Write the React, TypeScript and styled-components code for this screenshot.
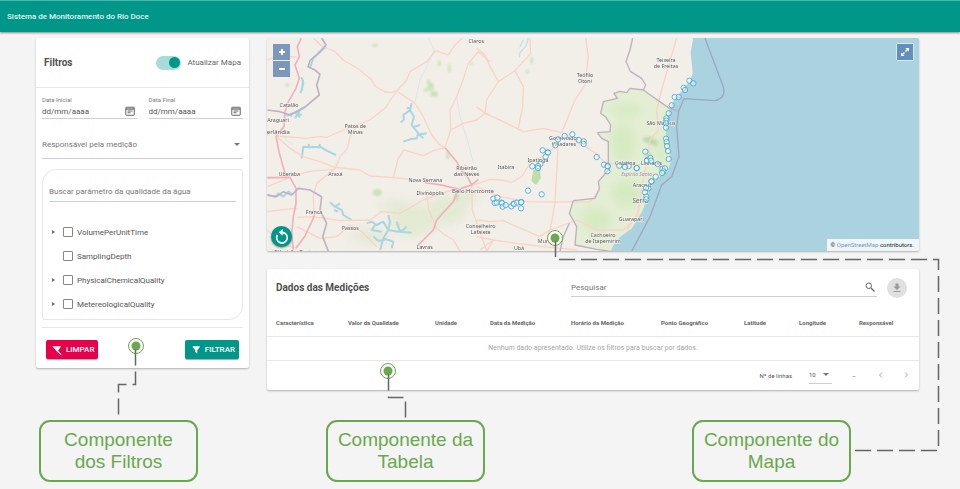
import React, { useState } from "react";
import styled, { createGlobalStyle, css } from "styled-components";

const teal = "#009688";
const green = "#6aa84f";
const line = "#e6e6e6";

const GlobalStyle = createGlobalStyle`
  *, *::before, *::after { box-sizing: border-box; }
  body {
    margin: 0;
    background: #f4f4f4;
    color: #555;
    font-family: Roboto, "Liberation Sans", sans-serif;
    font-size: 8px;
  }
  button, input, select { font: inherit; color: inherit; }
`;

const Page = styled.div`
  position: relative;
  overflow: hidden;
  padding-bottom: 8px;
`;

const TopBar = styled.header`
  display: flex;
  align-items: center;
  height: 32px;
  padding: 0 7px;
  background: ${teal};
  border-top: 1px solid #4db6ac;
  box-shadow: 0 1px 2px rgba(0, 0, 0, 0.45);
  color: #e4f5f3;
`;

const AppTitle = styled.h1`
  margin: 0;
  font-size: 8px;
  font-weight: 500;
`;

const Main = styled.main`
  display: grid;
  grid-template-columns: 213px minmax(0, 1fr);
  gap: 18px;
  align-items: start;
  padding: 6px 41px 0 36px;
`;

const Card = styled.section`
  background: #fff;
  border-radius: 2px;
  box-shadow: 0 1px 2px rgba(0, 0, 0, 0.28);
`;

const Column = styled.div`
  display: grid;
  gap: 18px;
`;

const CardTitle = styled.h2`
  margin: 0;
  font-size: 10px;
  font-weight: 700;
  color: #505050;
`;

const FilterHead = styled.div`
  display: flex;
  align-items: center;
  justify-content: space-between;
  height: 50px;
  padding: 0 8px;
  border-bottom: 1px solid ${line};
`;

const SwitchLabel = styled.label`
  display: flex;
  align-items: center;
  gap: 6px;
  color: #666;
`;

const Switch = styled.input`
  appearance: none;
  display: flex;
  align-items: center;
  width: 25px;
  height: 14px;
  margin: 0;
  padding: 0 1px;
  border-radius: 7px;
  background: #ddd;
  &::before {
    content: "";
    width: 11px;
    height: 11px;
    border-radius: 50%;
    background: #fff;
  }
  &:checked {
    justify-content: flex-end;
    background: #a8ddd7;
  }
  &:checked::before { background: ${teal}; }
`;

const FilterBody = styled.div`
  padding: 8px 6px 0;
`;

const DateRow = styled.div`
  display: grid;
  grid-template-columns: 1fr 1fr;
  gap: 12px;
`;

const Field = styled.div`
  min-width: 0;
`;

const FieldLabel = styled.label`
  display: block;
  height: 8px;
  font-size: 6px;
  line-height: 8px;
  color: #7a7a7a;
`;

const underline = css`
  border-bottom: 1px solid #cfcfcf;
`;

const InputRow = styled.div`
  display: flex;
  align-items: center;
  height: 15px;
  ${underline}
`;

const BareInput = styled.input`
  flex: 1;
  width: 0;
  min-width: 0;
  padding: 0;
  border: 0;
  outline: 0;
  background: transparent;
  &::placeholder { color: #777; opacity: 1; }
`;

const DateInput = styled(BareInput)`
  &::placeholder { color: #555; }
`;

const IconButton = styled.button<{ $size: number }>`
  display: grid;
  place-items: center;
  width: ${(p) => p.$size}px;
  height: ${(p) => p.$size}px;
  padding: 0;
  border: 0;
  background: transparent;
  color: #666;
`;

const SelectWrap = styled.div`
  position: relative;
  display: flex;
  align-items: center;
  height: 28px;
  margin-top: 12px;
  ${underline}
`;

const Select = styled.select`
  appearance: none;
  width: 100%;
  padding: 0;
  border: 0;
  outline: 0;
  background: transparent;
  color: #777;
`;

const Caret = styled.span<{ $right: number }>`
  position: absolute;
  right: ${(p) => p.$right}px;
  border: 3px solid transparent;
  border-top-color: #777;
  border-bottom-width: 0;
  pointer-events: none;
`;

const ParameterBox = styled.div`
  height: 151px;
  margin-top: 10px;
  padding: 12px 6px 0;
  border: 1px solid ${line};
  border-radius: 14px 3px 14px 3px;
`;

const ParameterSearch = styled.div`
  display: flex;
  height: 20px;
  ${underline}
`;

const Tree = styled.ul`
  margin: 18px 0 0;
  padding: 0;
  list-style: none;
`;

const TreeItem = styled.li`
  display: grid;
  grid-template-columns: 14px 1fr;
  align-items: center;
  height: 24px;
`;

const Expander = styled.button`
  width: 8px;
  height: 8px;
  padding: 0;
  border: 0;
  background: transparent;
  display: grid;
  place-items: center;
  &::before {
    content: "";
    border: 2px solid transparent;
    border-left: 3px solid #666;
    border-right: 0;
  }
`;

const CheckLabel = styled.label`
  grid-column: 2;
  display: flex;
  align-items: center;
  gap: 4px;
`;

const CheckBox = styled.input`
  appearance: none;
  width: 10px;
  height: 10px;
  margin: 0;
  border: 1px solid #858585;
  border-radius: 1px;
  &:checked { background: ${teal}; }
`;

const Actions = styled.div`
  display: flex;
  justify-content: space-between;
  align-items: center;
  height: 41px;
  margin-top: 7px;
  padding: 3px 4px 0;
  border-top: 1px solid ${line};
`;

const ActionButton = styled.button<{ $color: string }>`
  display: flex;
  align-items: center;
  gap: 4px;
  height: 19px;
  padding: 0 4px 0 6px;
  border: 0;
  border-radius: 2px;
  background: ${(p) => p.$color};
  box-shadow: 0 1px 1px rgba(0, 0, 0, 0.35);
  color: #fff;
  font-weight: 500;
`;

const MapCard = styled(Card)`
  position: relative;
  height: 213px;
  overflow: hidden;
  background: #f2efe9;
`;

const MapDrawing = styled.svg`
  display: block;
  width: 100%;
  height: 100%;
  font-family: "Noto Sans", sans-serif;
`;

const ZoomControl = styled.div`
  position: absolute;
  top: 6px;
  left: 6px;
  display: grid;
  gap: 1px;
`;

const MapButton = styled.button`
  display: grid;
  place-items: center;
  width: 17px;
  height: 16px;
  padding: 0;
  border: 0;
  background: #7b98bc;
  color: #fff;
`;

const FullScreen = styled(MapButton)`
  position: absolute;
  top: 5px;
  right: 5px;
  width: 18px;
  height: 18px;
  border: 1px solid #d5e8ef;
  border-radius: 1px;
  background: #658fbb;
`;

const ResetButton = styled(MapButton)`
  position: absolute;
  left: 4px;
  bottom: 4px;
  width: 21px;
  height: 21px;
  border-radius: 50%;
  background: ${teal};
  box-shadow: 0 1px 2px rgba(0, 0, 0, 0.4);
`;

const Attribution = styled.p`
  position: absolute;
  right: 0;
  bottom: 0;
  margin: 0;
  padding: 0 5px 0 4px;
  background: rgba(255, 255, 255, 0.8);
  color: #222;
  font-size: 6px;
  line-height: 12px;
  a { color: #7b98bc; text-decoration: none; }
`;

const TableHead = styled.div`
  display: flex;
  align-items: center;
  height: 37px;
  padding: 0 12px 0 9px;
`;

const TableSearch = styled.div`
  display: flex;
  align-items: center;
  flex: 0 1 306px;
  height: 19px;
  margin-left: auto;
  margin-right: 10px;
  ${underline}
`;

const Download = styled(IconButton)`
  border-radius: 50%;
  background: #e0e0e0;
  color: #999;
`;

const Table = styled.table`
  width: 100%;
  border-collapse: collapse;
  table-layout: fixed;
  th {
    height: 30px;
    padding: 4px 0 0 9px;
    border-bottom: 1px solid ${line};
    color: #666;
    font-size: 6px;
    font-weight: 700;
    text-align: left;
    white-space: nowrap;
  }
  td {
    height: 24px;
    padding: 0;
    border-bottom: 1px solid ${line};
    color: #a5a5a5;
    font-size: 7px;
    text-align: center;
  }
`;

const Pager = styled.div`
  display: flex;
  align-items: center;
  justify-content: flex-end;
  height: 29px;
  padding-right: 6px;
  font-size: 6px;
  color: #555;
`;

const RowsSelect = styled.div`
  position: relative;
  display: flex;
  align-items: center;
  width: 23px;
  height: 18px;
  margin: 0 20px 0 17px;
  ${underline}
  select { color: #555; }
`;

const Range = styled.span`
  width: 22px;
`;

const PageButton = styled(IconButton)`
  margin-left: 11px;
  color: #aaa;
`;

const PreviousButton = styled(IconButton)`
  color: #aaa;
`;

const Callouts = styled.footer`
  display: flex;
  margin-top: 30px;
  padding-left: 39px;
`;

const Callout = styled.p<{ $gap: number }>`
  width: 159px;
  height: 62px;
  margin: 0 ${(p) => p.$gap}px 0 0;
  padding: 7px 0;
  border: 2px solid ${green};
  border-radius: 11px;
  color: ${green};
  font-family: "Liberation Sans", sans-serif;
  font-size: 19px;
  line-height: 22px;
  text-align: center;
`;

const Connectors = styled.svg`
  position: absolute;
  top: 0;
  left: 0;
  pointer-events: none;
`;

const CalendarIcon = () => (
  <svg width="10" height="10" viewBox="0 0 20 20" fill="none" stroke="currentColor" strokeWidth="2">
    <rect x="1.500" y="2.500" width="17" height="16" rx="1" />
    <path d="M2 6h16" strokeWidth="2.600" />
    <path d="M5 10h10M5 13.500h6" />
  </svg>
);

const FunnelIcon = ({ off = false }: { off?: boolean }) => (
  <svg width="10" height="10" viewBox="0 0 24 24" fill="currentColor">
    <path d="M4 3h17v2L15 12.500V21L10 17V12.500L4 5z" />
    {off && <path d="M0 5L18 24" stroke="#e6004c" strokeWidth="3" />}
    {off && <path d="M2 3L22 23" stroke="currentColor" strokeWidth="2.500" />}
  </svg>
);

const SearchIcon = () => (
  <svg width="10" height="10" viewBox="0 0 20 20" fill="none" stroke="currentColor" strokeWidth="2">
    <circle cx="7.500" cy="7.500" r="5.500" />
    <path d="M12 12l7 7" strokeWidth="2.600" />
  </svg>
);

const DownloadIcon = () => (
  <svg width="10" height="10" viewBox="0 0 20 20" fill="currentColor">
    <path d="M7 1h6v6h4l-7 7-7-7h4zM3 16h14v2H3z" />
  </svg>
);

const Chevron = ({ d }: { d: string }) => (
  <svg width="8" height="8" viewBox="0 0 16 16" fill="none" stroke="currentColor" strokeWidth="2">
    <path d={d} />
  </svg>
);

const roadsWest = [
  "M160 24L185 48L225 65L250 90L300 120L335 150L345 168L375 186L395 187L410 183L440 150L450 125L500 95L527 62L565 75L585 45L605 26",
  "M410 183L375 235L330 270L290 285L270 320L262 355L240 380L226 415",
  "M48 318L140 325L180 319L200 322L250 300L290 285",
  "M48 318L90 355L130 380L180 395L225 412L300 420L330 438L400 443L470 450L590 475",
  "M22 445L88 440L150 424L225 418",
  "M400 443L415 385L432 360L490 377L520 362L555 353",
  "M410 183L465 220L490 260L515 315L540 345L555 353L572 300L570 240L590 200L612 140L625 100L655 65L690 95",
  "M572 300L610 280L650 270L675 250L690 255",
  "M226 415L170 460L160 500L162 550",
  "M22 545L60 540L110 535M22 470L88 443M22 600L60 640L110 655",
  "M110 562L160 560L240 572L330 570L365 545L420 550L490 510L590 475M500 480L500 500",
  "M500 480L506 540L530 595L550 612L580 630L600 664",
  "M622 440L605 420L615 405L635 415L638 440",
  "M635 465L637 540L665 620L680 664",
  "M110 590L180 625L230 620L270 585L300 600L350 650",
  "M22 90L60 75L110 82M22 310L10 350",
];
const roadsEast = [
  "M-10 55L15 75L30 110L55 155L105 122L152 70L150 24M55 155L20 210L15 250L70 275L130 305L190 295L245 308L285 210L315 165L325 80L317 24",
  "M105 122L130 170L128 230L115 295",
  "M245 308L290 335L345 368L372 395L440 410L500 400L555 395",
  "M235 320L232 390L225 516L218 560L210 600L195 650",
  "M-20 465L30 448L65 450L95 457L125 440L150 400L200 372L235 340",
  "M-10 470L60 500L140 515L225 516L330 515L360 480",
  "M-10 570L30 575L70 572L110 590L180 620L210 600L290 570L350 600L430 600L470 560L480 510",
  "M0 660L40 630L110 640L190 650L290 660M40 630L20 664",
  "M590 24L562 120L545 180L530 240L535 300L510 330L500 400L485 470L475 550L440 600",
  "M-10 230L15 250M-10 620L40 630",
];
const motorways = [
  "M124 24L112 50L118 80L105 105L118 145L108 175L85 215L75 245L72 290L48 318L58 370L75 430L90 442L108 475L108 520L100 560L95 610L100 664",
  "M108 655L135 618L160 565L165 545",
  "M22 443L88 442",
  "M555 353L590 395L605 425L622 440L635 465L595 478L580 515L530 570L520 600L470 650",
  "M495 458L545 465L595 478M635 465L655 448",
];
const rivers = [
  "M198 50L160 85L150 112M80 258L110 245L135 230M95 260L90 250M105 265L120 240M120 262L108 250L125 255",
  "M125 142L130 160L122 190M129 150L126 182",
  "M455 220L450 240L462 260L455 285L475 310L470 325L450 328L430 335M450 240L430 255L432 268L422 278M462 290L480 285M470 318L485 312L500 310M455 232L440 235M475 310L490 325",
  "M125 385L130 350L150 352L180 350L200 362L228 375M150 352L145 342M175 355L180 342",
  "M210 517L225 530L245 540L250 555L275 570M225 530L240 520M235 545L222 540",
  "M320 580L335 575L350 585L370 575L385 600L415 605L430 600L440 590M385 600L370 625L360 660M385 555L390 575L385 600M345 585L335 600L365 605M410 575L420 605L455 608M370 625L385 630L400 635L395 655M340 620L355 632L375 630",
  "M22 495L45 500L55 490L70 500L85 485L95 492",
];
const streams = "M75 320L78 332L92 336L100 345M505 24L522 60L500 110L480 150L465 215M590 200L600 260L625 340L640 400";

type Town = [number, number, string, number?];

const townsWest: Town[] = [
  [649, 39, "Claros"], [87, 230, "Catalão"], [54, 276, "Araguari"], [55, 313, "erlândia", 18],
  [286, 293, "Patos de|Minas"], [88, 437, "Uberaba"], [226, 437, "Araxá"],
  [620, 421, "Ribeirão|das Neves"], [496, 455, "Nova Serrana"], [511, 496, "Divinópolis"],
  [639, 489, "Belo Horizonte", 18], [162, 552, "Franca"], [271, 601, "Passos"],
  [662, 594, "Conselheiro|Lafaiete"], [494, 656, "Lavras"], [103, 672, "Ribeirão Preto", 18],
];
const townsEast: Town[] = [
  [558, 97, "Teixeira|de Freitas"], [315, 142, "Teófilo|Otoni"],
  [543, 286, "São Mateus"], [252, 330, "Governador|Valadares"], [174, 397, "Ipatinga"],
  [78, 417, "Itabira"], [436, 406, "Colatina"], [514, 406, "Linhares"], [487, 470, "Aracruz"],
  [481, 519, "Serra", 19], [454, 572, "Guarapari"], [369, 622, "Cachoeiro|de Itapemirim"],
  [200, 640, "Muriaé"], [117, 660, "Ubá"],
];

const stations = [
  [628, 152], [640, 160], [611, 173], [615, 180], [584, 201], [596, 201], [575, 226], [566, 250], [559, 265],
  [559, 272], [558, 280], [558, 293], [558, 326], [560, 336], [561, 348], [564, 363], [566, 387], [496, 365],
  [501, 391], [501, 392], [511, 384], [513, 392], [533, 402], [547, 416], [555, 415], [550, 424], [546, 429],
  [527, 440], [515, 454], [514, 454], [505, 475], [498, 474], [495, 487], [499, 500], [499, 508], [470, 415],
  [470, 414], [446, 408], [435, 411], [418, 407], [372, 404], [383, 408], [383, 409], [382, 424], [350, 381],
  [311, 334], [311, 342], [296, 330], [277, 313], [254, 318], [234, 328], [226, 346], [188, 361], [203, 367],
  [204, 368], [197, 380], [181, 402], [174, 408], [157, 409], [174, 414], [144, 482], [185, 493], [40, 506],
  [52, 503], [44, 519], [50, 518], [65, 518], [66, 520], [68, 530], [77, 525], [94, 529], [101, 521],
  [102, 522], [111, 518], [124, 516], [123, 517], [123, 535],
];

const coast =
  "L420 620L455 595L485 545L500 510L508 475L530 445L560 425L571 400L568 350L556 310L560 270L568 240L582 210L608 180L632 150";

const Roads = ({ paths, color, width }: { paths: string[]; color: string; width: number }) => (
  <g fill="none" stroke={color} strokeWidth={width} strokeLinejoin="round">
    {paths.map((d) => <path key={d} d={d} />)}
  </g>
);

const Towns = ({ items }: { items: Town[] }) => (
  <g textAnchor="middle" fill="#555" stroke="#f7f5f1" strokeWidth="3" paintOrder="stroke">
    {items.map(([x, y, name, size = 16]) => (
      <text key={name} x={x} y={y} fontSize={size}>
        {name.split("|").map((part, i) => <tspan key={part} x={x} dy={i * 18}>{part}</tspan>)}
      </text>
    ))}
  </g>
);

const forest: [number, number, number, number][] = [
  [512, 170, 10, 12], [522, 192, 12, 9], [498, 180, 7, 6], [505, 155, 5, 7], [538, 100, 5, 9], [568, 115, 4, 14],
  [82, 165, 7, 5], [352, 487, 14, 11], [590, 500, 8, 11], [345, 46, 10, 4], [635, 100, 4, 5], [564, 375, 5, 14],
];

const RegionMap = () => (
  <MapDrawing viewBox="0 0 1956 639" preserveAspectRatio="xMidYMid slice" role="img" aria-label="Mapa da bacia do Rio Doce">
    <defs>
      <filter id="haze" x="-40%" y="-40%" width="180%" height="180%">
        <feGaussianBlur stdDeviation="14" />
      </filter>
      <filter id="edge" x="-20%" y="-20%" width="140%" height="140%">
        <feGaussianBlur stdDeviation="3" />
      </filter>
    </defs>
    <rect width="1956" height="639" fill="#f2efe9" />
    <g transform="translate(-21 -24)">
      <g fill="#dbe8c8" opacity="0.65" filter="url(#haze)">
        <ellipse cx="460" cy="570" rx="75" ry="50" />
        <ellipse cx="560" cy="540" rx="60" ry="45" />
        <ellipse cx="330" cy="620" rx="60" ry="22" />
        <ellipse cx="620" cy="500" rx="35" ry="22" />
        <ellipse cx="400" cy="525" rx="45" ry="15" />
      </g>
      <g fill="#cbe3b8" filter="url(#edge)">
        {forest.map(([x, y, rx, ry]) => <ellipse key={`${x}-${y}`} cx={x} cy={y} rx={rx} ry={ry} />)}
      </g>
      <path d={streams} fill="none" stroke="#dce6e6" strokeWidth="3" />
      <Roads paths={rivers} color="#aad5e3" width={6} />
      <Roads paths={roadsWest} color="#f9d3c8" width={4} />
      <Roads paths={motorways} color="#f2b0bd" width={5} />
      <g fill="none" stroke="#c0b2c6" strokeWidth="5" strokeLinejoin="round">
        <path d="M185 24L198 45L172 72L150 92L144 110L165 120L180 133L170 165L178 195L130 235L90 255L60 245L22 240" />
        <path d="M22 495L50 500L70 485L95 495L115 475L150 480L185 500L180 540L200 580L188 620L205 664" />
      </g>
    </g>
    <g transform="translate(639 -24)">
      <path d={`M392 664L400 645${coast}L638 130L632 70L640 20H1400V664Z`} fill="#aad3df" />
      <path
        d="M392 664L350 658L285 645L290 590L268 550L280 512L345 505L358 475L355 455L385 420L385 335L365 325L352 308L390 305L392 285L378 262L362 250L370 215L412 205L402 190L420 184L440 188L450 175L490 180L568 235L560 270L556 310L568 350L571 400L560 425L530 445L508 475L500 510L485 545L455 595L420 620L400 645Z"
        fill="#e4eed4"
      />
      <g fill="#d2e9bd" filter="url(#haze)" opacity="0.8">
        <ellipse cx="430" cy="340" rx="35" ry="60" />
        <ellipse cx="440" cy="490" rx="45" ry="40" />
        <ellipse cx="350" cy="570" rx="45" ry="35" />
        <ellipse cx="440" cy="240" rx="45" ry="20" />
        <ellipse cx="545" cy="360" rx="14" ry="50" />
      </g>
      <g fill="#bfdcab">
        <path d="M160 420L180 418L182 445L168 466L154 452Z" />
        <g filter="url(#edge)">
          <path d="M490 322L512 320L535 335L530 350L505 340L490 334Z" />
          <ellipse cx="155" cy="92" rx="4" ry="11" opacity="0.7" />
          <ellipse cx="142" cy="125" rx="5" ry="7" opacity="0.7" />
          <ellipse cx="505" cy="375" rx="7" ry="12" />
        </g>
      </g>
      <path d="M145 24L138 48L120 68L118 82M130 30L120 50" fill="none" stroke="#c5e0e8" strokeWidth="4" />
      <Roads paths={roadsEast} color="#f9d3c8" width={4} />
      <g fill="none" stroke="#bdb0bf" strokeWidth="4" strokeLinejoin="round">
        <path d="M458 24L450 60L438 95L452 125L485 145L497 165L490 180L568 235L596 243" />
        <path d="M490 180L450 175L440 188L420 184L402 190L412 205L370 215L362 250L378 262L392 285L390 305L352 308L365 325L385 335L385 420L355 455L358 475L345 505L280 512L268 550L290 590L285 645L350 658L392 664" />
        <path d="M268 580L250 620L240 664" />
        <path d="M673 20L728 165Q742 202 705 212L612 206L596 243L590 290L597 380L575 440L545 465L510 560L455 664" stroke="#9ea6c2" />
      </g>
      <Towns items={townsEast} />
      <text x="470" y="438" fontSize="15" fontStyle="italic" textAnchor="middle" fill="#b08bbd">Espírito Santo</text>
    </g>
    <g transform="translate(-21 -24)"><Towns items={townsWest} /></g>
    <g transform="translate(639 -24)" fill="rgba(255,255,255,0.4)" stroke="#3ba4d8" strokeOpacity="0.8" strokeWidth="3">
      {stations.map(([x, y], i) => <circle key={i} cx={x} cy={y} r="8" />)}
    </g>
  </MapDrawing>
);

const parameters = [
  { name: "VolumePerUnitTime", nested: true },
  { name: "SamplingDepth", nested: false },
  { name: "PhysicalChemicalQuality", nested: true },
  { name: "MetereologicalQuality", nested: true },
];

const columns: [string, number][] = [
  ["Característica", 72], ["Valor da Qualidade", 87], ["Unidade", 55], ["Data da Medição", 81],
  ["Horário da Medição", 90], ["Ponto Geográfico", 83], ["Latitude", 55], ["Longitude", 60],
  ["Responsável", 69],
];

const DateField = ({ id, label }: { id: string; label: string }) => (
  <Field>
    <FieldLabel htmlFor={id}>{label}</FieldLabel>
    <InputRow>
      <DateInput id={id} placeholder="dd/mm/aaaa" />
      <IconButton $size={14} aria-label={`Escolher ${label}`}><CalendarIcon /></IconButton>
    </InputRow>
  </Field>
);

const Marker = ({ x, y }: { x: number; y: number }) => (
  <g>
    <circle cx={x} cy={y} r="7.500" fill="#fff" stroke={green} />
    <circle cx={x} cy={y} r="4.500" fill={green} />
  </g>
);

export default function App() {
  const [refresh, setRefresh] = useState(true);
  return (
    <Page>
      <GlobalStyle />
      <TopBar><AppTitle>Sistema de Monitoramento do Rio Doce</AppTitle></TopBar>
      <Main>
        <Card>
          <FilterHead>
            <CardTitle>Filtros</CardTitle>
            <SwitchLabel>
              <Switch type="checkbox" role="switch" checked={refresh} onChange={(e) => setRefresh(e.target.checked)} />
              Atualizar Mapa
            </SwitchLabel>
          </FilterHead>
          <FilterBody>
            <DateRow>
              <DateField id="start" label="Data Inicial" />
              <DateField id="end" label="Data Final" />
            </DateRow>
            <SelectWrap>
              <Select aria-label="Responsável pela medição"><option>Responsável pela medição</option></Select>
              <Caret $right={3} />
            </SelectWrap>
            <ParameterBox>
              <ParameterSearch>
                <BareInput aria-label="Buscar parâmetro" placeholder="Buscar parâmetro da qualidade da água" />
              </ParameterSearch>
              <Tree>
                {parameters.map(({ name, nested }) => (
                  <TreeItem key={name}>
                    {nested && <Expander aria-label={`Expandir ${name}`} />}
                    <CheckLabel><CheckBox type="checkbox" />{name}</CheckLabel>
                  </TreeItem>
                ))}
              </Tree>
            </ParameterBox>
            <Actions>
              <ActionButton $color="#e6004c"><FunnelIcon off />LIMPAR</ActionButton>
              <ActionButton $color={teal}><FunnelIcon />FILTRAR</ActionButton>
            </Actions>
          </FilterBody>
        </Card>
        <Column>
          <MapCard>
            <RegionMap />
            <ZoomControl>
              <MapButton aria-label="Aproximar">
                <svg width="8" height="8" viewBox="0 0 8 8" stroke="currentColor" strokeWidth="2"><path d="M4 1v6M1 4h6" /></svg>
              </MapButton>
              <MapButton aria-label="Afastar">
                <svg width="8" height="8" viewBox="0 0 8 8" stroke="currentColor" strokeWidth="2"><path d="M1 4h6" /></svg>
              </MapButton>
            </ZoomControl>
            <FullScreen aria-label="Tela cheia">
              <svg width="10" height="10" viewBox="0 0 20 20" fill="currentColor">
                <path d="M11 2h7v7l-2.500-2.500-3.500 3.500-2-2 3.500-3.500zM9 18H2v-7l2.500 2.500L8 10l2 2-3.500 3.500z" />
              </svg>
            </FullScreen>
            <ResetButton aria-label="Recarregar mapa">
              <svg width="16" height="16" viewBox="0 0 24 24" fill="none" stroke="currentColor" strokeWidth="2.600">
                <path d="M12 5A8 8 0 1 1 5 9" />
                <path d="M13 0V10L7 5z" fill="currentColor" stroke="none" />
              </svg>
            </ResetButton>
            <Attribution>© <a href="#osm">OpenStreetMap</a> contributors.</Attribution>
          </MapCard>
          <Card>
            <TableHead>
              <CardTitle>Dados das Medições</CardTitle>
              <TableSearch>
                <BareInput aria-label="Pesquisar" placeholder="Pesquisar" />
                <IconButton $size={14} aria-label="Buscar"><SearchIcon /></IconButton>
              </TableSearch>
              <Download $size={20} aria-label="Baixar dados"><DownloadIcon /></Download>
            </TableHead>
            <Table>
              <colgroup>{columns.map(([name, width]) => <col key={name} width={width} />)}</colgroup>
              <thead><tr>{columns.map(([name]) => <th key={name}>{name}</th>)}</tr></thead>
              <tbody>
                <tr><td colSpan={9}>Nenhum dado apresentado. Utilize os filtros para buscar por dados.</td></tr>
              </tbody>
            </Table>
            <Pager>
              <label htmlFor="rows">Nº de linhas</label>
              <RowsSelect>
                <Select id="rows"><option>10</option></Select>
                <Caret $right={3} />
              </RowsSelect>
              <Range>–</Range>
              <PreviousButton $size={14} aria-label="Página anterior"><Chevron d="M10 3L5 8l5 5" /></PreviousButton>
              <PageButton $size={14} aria-label="Próxima página"><Chevron d="M6 3l5 5-5 5" /></PageButton>
            </Pager>
          </Card>
        </Column>
      </Main>
      <Callouts>
        <Callout $gap={128}>Componente<br />dos Filtros</Callout>
        <Callout $gap={207}>Componente da<br />Tabela</Callout>
        <Callout $gap={0}>Componente do<br />Mapa</Callout>
      </Callouts>
      <Connectors width="960" height="489" viewBox="0 0 960 489" aria-hidden="true">
        <Marker x={136} y={346} />
        <Marker x={388} y={371} />
        <Marker x={555} y={238} />
        <g fill="none" stroke="#666" strokeWidth="1.500" strokeDasharray="16 6">
          <path d="M135.500 349.500V384.500H118.500V414.500" />
          <path d="M388.500 374.500V397.500H405.500V417.500" />
          <path d="M555.500 241V259.500H938.500V450.500H854" />
        </g>
      </Connectors>
    </Page>
  );
}
